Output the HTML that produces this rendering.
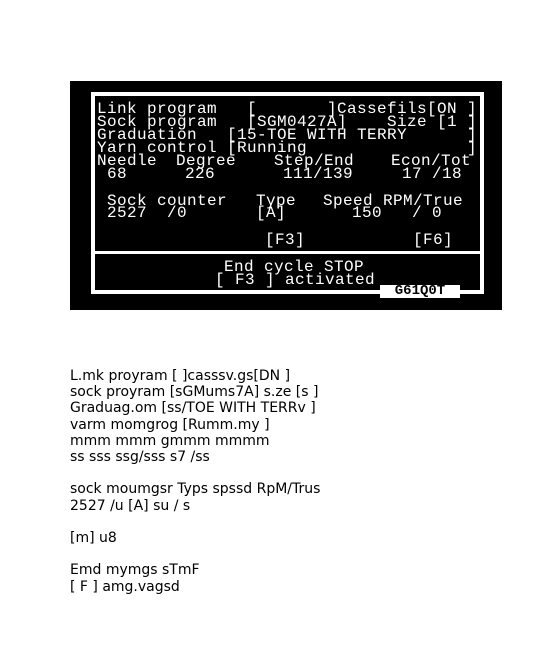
<!DOCTYPE html>
<html><head><meta charset="utf-8"><style>
html,body{margin:0;padding:0;background:#fff;width:557px;height:662px;overflow:hidden;position:relative}
#p{position:absolute;left:70px;top:81px;width:432px;height:229px;background:#000}
.b{position:absolute;border:4px solid #fff}
.t{position:absolute;color:#fff;font-family:"Liberation Mono","DejaVu Sans Mono",monospace;font-size:16px;letter-spacing:0.4px;line-height:13px;white-space:pre}
#low{position:absolute;left:70px;top:368px;font-family:"DejaVu Sans","Liberation Sans",sans-serif;font-size:14px;line-height:16.2px;color:#000;white-space:pre}
</style></head><body>
<div id="p"></div>
<div class="b" style="left:91px;top:92px;width:385px;height:194px"></div>
<div style="position:absolute;left:95px;top:251px;width:385px;height:3px;background:#fff"></div>
<div style="position:absolute;left:380px;top:285px;width:80px;height:13px;background:#fff;color:#000;font-family:'Liberation Mono',monospace;font-size:14px;line-height:13px;text-align:center;font-weight:bold">G61Q0T</div>
<div class="t" style="left:97px;top:103px">Link program   [       ]Cassefils[ON ]
Sock program   [SGM0427A]    Size [1 ]
Graduation   [15-TOE WITH TERRY      ]
Yarn control [Running                ]</div>
<div class="t" style="left:97px;top:155px">Needle</div>
<div class="t" style="left:176px;top:155px">Degree</div>
<div class="t" style="left:274px;top:155px">Step/End</div>
<div class="t" style="left:391px;top:155px">Econ/Tot</div>
<div class="t" style="left:107px;top:168px">68</div>
<div class="t" style="left:185px;top:168px">226</div>
<div class="t" style="left:283px;top:168px">111/139</div>
<div class="t" style="left:402px;top:168px">17 /18</div>
<div class="t" style="left:107px;top:195px">Sock counter</div>
<div class="t" style="left:256px;top:195px">Type</div>
<div class="t" style="left:323px;top:195px">Speed RPM/True</div>
<div class="t" style="left:107px;top:207px">2527  /0</div>
<div class="t" style="left:256px;top:207px">[A]</div>
<div class="t" style="left:352px;top:207px">150   / 0</div>
<div class="t" style="left:265px;top:234px">[F3]</div>
<div class="t" style="left:413px;top:234px">[F6]</div>
<div class="t" style="left:224px;top:261px">End cycle STOP</div>
<div class="t" style="left:215px;top:274px">[ F3 ] activated</div>
<div id="low">L.mk proyram [ ]casssv.gs[DN ]
sock proyram [sGMums7A] s.ze [s ]
Graduag.om [ss/TOE WITH TERRv ]
varm momgrog [Rumm.my ]
mmm mmm gmmm mmmm
ss sss ssg/sss s7 /ss

sock moumgsr Typs spssd RpM/Trus
2527 /u [A] su / s

[m] u8

Emd mymgs sTmF
[ F ] amg.vagsd</div>
</body></html>
